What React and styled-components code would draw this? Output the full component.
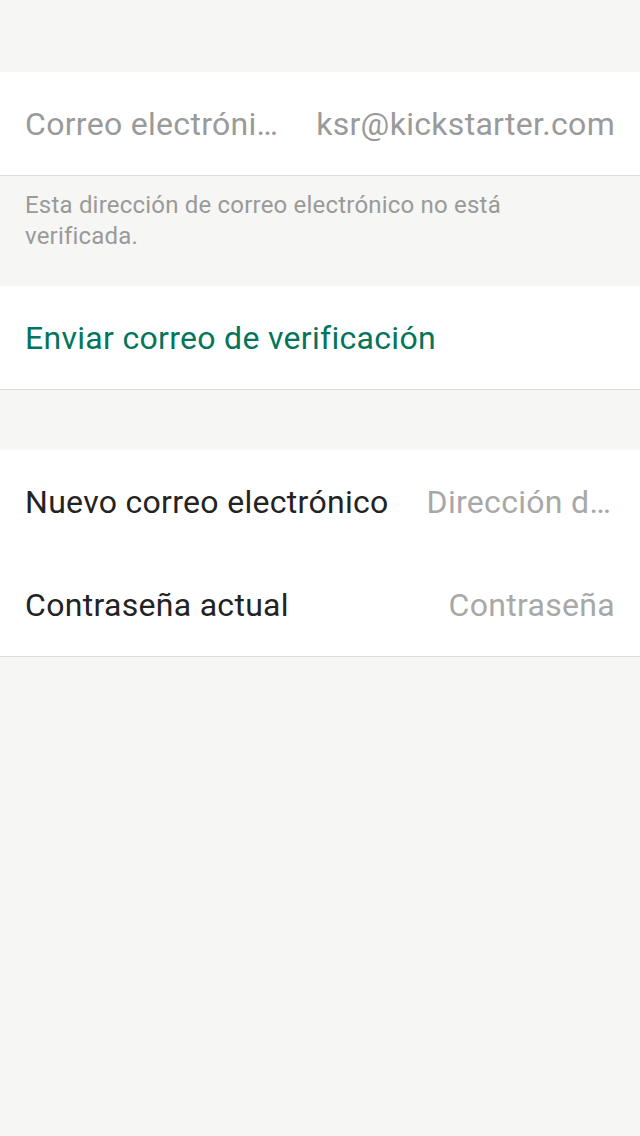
import styled, { createGlobalStyle } from "styled-components";

const Global = createGlobalStyle`
  html, body {
    margin: 0;
    padding: 0;
    background: #f6f6f4;
  }
  body {
    font-family: Roboto, "Liberation Sans", sans-serif;
    -webkit-font-smoothing: antialiased;
  }
`;

const Page = styled.div`
  min-height: 1136px;
  background: #f6f6f4;
  padding-top: 72px;
  box-sizing: border-box;
`;

const Card = styled.div`
  background: #fff;
  border-bottom: 1px solid #dcdcdc;
  margin-top: ${(p) => p.gap || 0}px;
`;

const Row = styled.div`
  height: 103px;
  display: flex;
  align-items: center;
  justify-content: space-between;
  gap: 38px;
  padding: 0 25px;
  font-size: 32px;
  letter-spacing: 0.3px;
  white-space: nowrap;
`;

const Label = styled.span`
  color: ${(p) => (p.muted ? "#9a9a9a" : "#232323")};
  flex-shrink: ${(p) => (p.shrink ? 1 : 0)};
  min-width: 0;
  overflow: hidden;
  text-overflow: ellipsis;
`;

const Value = styled.span`
  color: ${(p) => (p.placeholder ? "#a8a8a8" : "#9a9a9a")};
  flex-shrink: ${(p) => (p.shrink ? 1 : 0)};
  min-width: 0;
  overflow: hidden;
  text-overflow: ellipsis;
  text-align: right;
`;

const Action = styled.span`
  color: #03755b;
`;

const Note = styled.p`
  margin: 0;
  padding: 14px 25px 0;
  height: 110px;
  box-sizing: border-box;
  font-size: 24px;
  letter-spacing: 0.2px;
  line-height: 31px;
  color: #9a9a9a;
`;

export default function App() {
  return (
    <Page>
      <Global />
      <Card>
        <Row>
          <Label muted shrink>
            Correo electrónico
          </Label>
          <Value>ksr@kickstarter.com</Value>
        </Row>
      </Card>
      <Note>Esta dirección de correo electrónico no está verificada.</Note>
      <Card>
        <Row>
          <Action>Enviar correo de verificación</Action>
        </Row>
      </Card>
      <Card gap={60}>
        <Row>
          <Label>Nuevo correo electrónico</Label>
          <Value placeholder shrink>
            Dirección de correo electrónico
          </Value>
        </Row>
        <Row>
          <Label>Contraseña actual</Label>
          <Value placeholder>Contraseña</Value>
        </Row>
      </Card>
    </Page>
  );
}
